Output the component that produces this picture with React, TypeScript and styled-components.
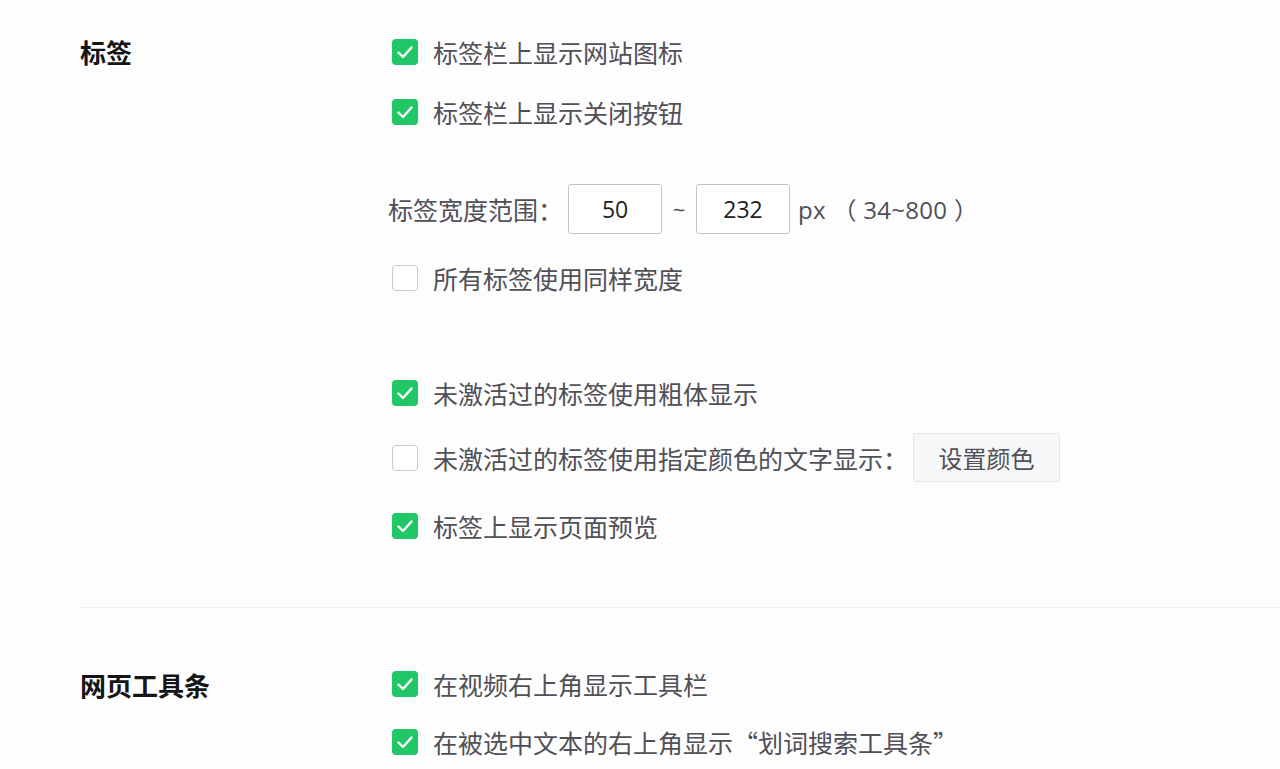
import React from 'react';
import styled, { createGlobalStyle } from 'styled-components';

const GlobalStyle = createGlobalStyle`
  html, body {
    margin: 0;
    padding: 0;
    background: #fdfdfe;
    font-family: "Noto Sans CJK SC", "Noto Sans", sans-serif;
  }
`;

const Page = styled.div`
  width: 1280px;
  height: 769px;
  overflow: hidden;
  background: #fdfdfe;
`;

const Section = styled.section<{ top: number }>`
  display: grid;
  grid-template-columns: 312px 1fr;
  padding: ${({ top }) => top}px 0 0 80px;
`;

const Heading = styled.h2`
  margin: 0;
  height: 58px;
  line-height: 58px;
  font-size: 26px;
  font-weight: 700;
  color: #151515;
`;

const Options = styled.div`
  display: flex;
  flex-direction: column;
`;

const Row = styled.div<{ space?: number; h?: number; shift?: number }>`
  display: flex;
  align-items: center;
  box-sizing: border-box;
  height: ${({ h }) => h ?? 60}px;
  padding-bottom: 3px;
  margin-top: ${({ space }) => space ?? 0}px;
  margin-left: ${({ shift }) => shift ?? 0}px;
  font-size: 25px;
  color: #505056;
  white-space: nowrap;
`;

const Box = styled.span<{ checked: boolean }>`
  flex: 0 0 26px;
  width: 26px;
  height: 26px;
  box-sizing: border-box;
  border-radius: 4px;
  margin-right: 15px;
  display: flex;
  align-items: center;
  justify-content: center;
  background: ${({ checked }) => (checked ? '#21c767' : '#fff')};
  border: ${({ checked }) => (checked ? 'none' : '1.5px solid #c9c9cf')};
`;

const Input = styled.div`
  width: 94px;
  height: 50px;
  box-sizing: border-box;
  border: 1px solid #c4c4c8;
  border-radius: 3px;
  background: #fff;
  display: flex;
  align-items: center;
  justify-content: center;
  font-family: "Open Sans", "Noto Sans", sans-serif;
  font-size: 23px;
  color: #222;
`;

const Tilde = styled.span`
  width: 34px;
  text-align: center;
  font-family: "Open Sans", sans-serif;
  font-size: 22px;
`;

const Unit = styled.span`
  margin-left: 8px;
  font-family: "Open Sans", "Noto Sans CJK SC", sans-serif;
  font-size: 24px;
  letter-spacing: 0.3px;
`;

const Colon = styled.span`
  margin-right: 5px;
`;

const Button = styled.button`
  width: 147px;
  height: 49px;
  border: 1px solid #e4e5ea;
  border-radius: 3px;
  background: #f6f7f9;
  font-family: "Noto Sans CJK SC", sans-serif;
  font-size: 24px;
  color: #505056;
`;

const Divider = styled.hr`
  margin: 50px 0 0 80px;
  border: none;
  border-top: 1.5px solid #f0f1f4;
`;

const Check: React.FC<{ checked: boolean }> = ({ checked }) => (
  <Box checked={checked}>
    {checked && (
      <svg width="26" height="26" viewBox="0 0 26 26">
        <polyline
          points="6.5,13.5 11,18 19.5,8.5"
          fill="none"
          stroke="#fff"
          strokeWidth="2.4"
          strokeLinecap="round"
          strokeLinejoin="round"
        />
      </svg>
    )}
  </Box>
);

const Option: React.FC<{
  checked: boolean;
  space?: number;
  h?: number;
  children: React.ReactNode;
}> = ({ checked, space, h, children }) => (
  <Row space={space} h={h}>
    <Check checked={checked} />
    {children}
  </Row>
);

const App: React.FC = () => (
  <Page>
    <GlobalStyle />
    <Section top={23}>
      <div>
        <Heading>标签</Heading>
      </div>
      <Options>
        <Option checked>标签栏上显示网站图标</Option>
        <Option checked>标签栏上显示关闭按钮</Option>
        <Row space={37} shift={-4}>
          标签宽度范围<Colon>：</Colon>
          <Input>50</Input>
          <Tilde>~</Tilde>
          <Input>232</Input>
          <Unit>px （ 34~800 ）</Unit>
        </Row>
        <Option checked={false} space={9}>
          所有标签使用同样宽度
        </Option>
        <Option checked space={55}>
          未激活过的标签使用粗体显示
        </Option>
        <Option checked={false} space={5}>
          未激活过的标签使用指定颜色的文字显示<Colon>：</Colon>
          <Button>设置颜色</Button>
        </Option>
        <Option checked space={8}>
          标签上显示页面预览
        </Option>
      </Options>
    </Section>
    <Divider />
    <Section top={48}>
      <div>
        <Heading>网页工具条</Heading>
      </div>
      <Options>
        <Option checked h={58}>在视频右上角显示工具栏</Option>
        <Option checked h={58}>
          在被选中文本的右上角显示“划词搜索工具条”
        </Option>
      </Options>
    </Section>
  </Page>
);

export default App;
